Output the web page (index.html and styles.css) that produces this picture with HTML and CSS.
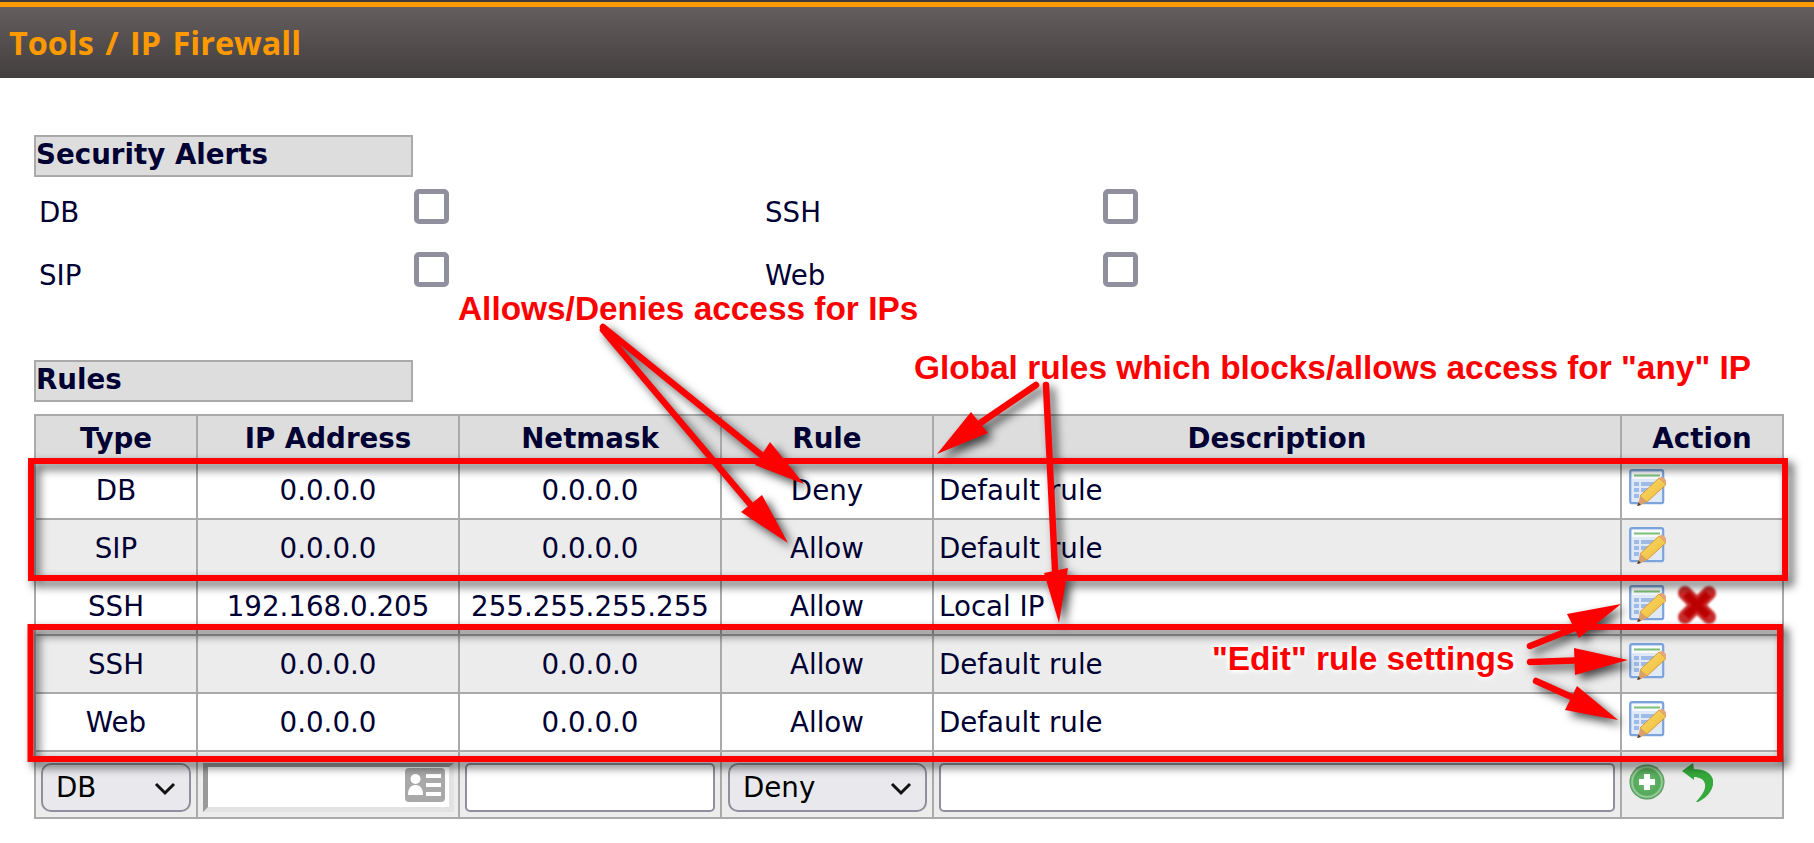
FILE: index.html
```html
<!DOCTYPE html>
<html lang="en">
<head>
<meta charset="utf-8">
<title>Tools / IP Firewall</title>
<link rel="stylesheet" href="styles.css">
</head>
<body>
<svg class="defs" width="0" height="0" aria-hidden="true">
  <defs>
    <linearGradient id="penYellow" x1="0" y1="0" x2="1" y2="1">
      <stop offset="0" stop-color="#f9dc6a"/><stop offset="1" stop-color="#eeb93a"/>
    </linearGradient>
    <radialGradient id="addGreen" cx="0.5" cy="0.5" r="0.5">
      <stop offset="0" stop-color="#6cc06e"/><stop offset="0.75" stop-color="#55a85a"/><stop offset="0.85" stop-color="#9fd0a2"/><stop offset="1" stop-color="#3f8f48"/>
    </radialGradient>
    <symbol id="icon-edit" viewBox="0 0 37 37">
      <rect x="1.2" y="1.2" width="33" height="33" rx="2" fill="#dfe9f8" stroke="#7ba3dc" stroke-width="2.2"/>
      <rect x="3" y="3" width="29.500" height="7" fill="#f7fafd"/>
      <rect x="5" y="5.500" width="26" height="2" fill="#7cc07a"/>
      <g fill="#9dbbe6">
        <rect x="5" y="13" width="5" height="4"/><rect x="12" y="13" width="18" height="4"/>
        <rect x="5" y="19" width="5" height="4"/><rect x="12" y="19" width="10" height="4"/>
        <rect x="5" y="25" width="5" height="4"/><rect x="12" y="25" width="5" height="4"/>
      </g>
      <polygon points="30,9 37,15.500 18,33 11,27" fill="url(#penYellow)" stroke="#d99a3a" stroke-width="1"/>
      <polygon points="30,9 33,7.500 37.500,11.500 37,15.500" fill="#e8a77a"/>
      <polygon points="11,27 18,33 9,37" fill="#d9a06a"/>
      <polygon points="9.500,33.500 12,36 8,37" fill="#5a3a22"/>
    </symbol>
  </defs>
</svg>

<header class="topbar">
  <h1 class="topbar-title">Tools / IP Firewall</h1>
</header>

<main class="page">
  <h2 class="section-title">Security Alerts</h2>
  <div class="alerts">
    <label class="alert-label">DB</label><input class="check" type="checkbox">
    <label class="alert-label">SSH</label><input class="check" type="checkbox">
    <label class="alert-label">SIP</label><input class="check" type="checkbox">
    <label class="alert-label">Web</label><input class="check" type="checkbox">
  </div>

  <h2 class="section-title rules-title">Rules</h2>
  <table class="rules">
    <colgroup>
      <col class="c-type"><col class="c-ip"><col class="c-mask"><col class="c-rule"><col class="c-desc"><col class="c-act">
    </colgroup>
    <thead>
      <tr><th>Type</th><th>IP Address</th><th>Netmask</th><th>Rule</th><th>Description</th><th>Action</th></tr>
    </thead>
    <tbody>
      <tr><td>DB</td><td>0.0.0.0</td><td>0.0.0.0</td><td>Deny</td><td class="left">Default rule</td>
        <td class="action"><svg class="ic-edit"><use href="#icon-edit"/></svg></td></tr>
      <tr><td>SIP</td><td>0.0.0.0</td><td>0.0.0.0</td><td>Allow</td><td class="left">Default rule</td>
        <td class="action"><svg class="ic-edit"><use href="#icon-edit"/></svg></td></tr>
      <tr><td>SSH</td><td>192.168.0.205</td><td>255.255.255.255</td><td>Allow</td><td class="left">Local IP</td>
        <td class="action"><svg class="ic-edit"><use href="#icon-edit"/></svg><svg class="ic-del" viewBox="0 0 40 40"><path d="M8 8 L32 32 M32 8 L8 32" stroke="#c92a2a" stroke-width="14" stroke-linecap="round" fill="none"/><path d="M9 9 L31 31 M31 9 L9 31" stroke="#bb0000" stroke-width="8" fill="none"/></svg></td></tr>
      <tr><td>SSH</td><td>0.0.0.0</td><td>0.0.0.0</td><td>Allow</td><td class="left">Default rule</td>
        <td class="action"><svg class="ic-edit"><use href="#icon-edit"/></svg></td></tr>
      <tr><td>Web</td><td>0.0.0.0</td><td>0.0.0.0</td><td>Allow</td><td class="left">Default rule</td>
        <td class="action"><svg class="ic-edit"><use href="#icon-edit"/></svg></td></tr>
      <tr class="add-row">
        <td><div class="select-wrap s-type"><select class="select"><option>DB</option></select>
          <svg class="chev" viewBox="0 0 22 14"><path d="M2 2 L11 11 L20 2" fill="none" stroke="#111" stroke-width="3"/></svg></div></td>
        <td><div class="ip-wrap"><input class="ip-input" type="text">
          <svg class="card" viewBox="0 0 40 34"><rect width="40" height="34" rx="4" fill="#a9a9a9"/><circle cx="10.500" cy="11" r="5" fill="#fff"/><path d="M3 27 C3 19 7 17 10.500 17 C14 17 18 19 18 27 Z" fill="#fff"/><rect x="21" y="6" width="15" height="4" fill="#fff"/><rect x="21" y="15" width="15" height="4" fill="#fff"/><rect x="21" y="24" width="15" height="4" fill="#fff"/></svg></div></td>
        <td><input class="text-input" type="text"></td>
        <td><div class="select-wrap s-rule"><select class="select"><option>Deny</option></select>
          <svg class="chev" viewBox="0 0 22 14"><path d="M2 2 L11 11 L20 2" fill="none" stroke="#111" stroke-width="3"/></svg></div></td>
        <td><input class="text-input" type="text"></td>
        <td class="action add-actions"><svg class="ic-add" viewBox="0 0 36 36"><circle cx="18" cy="18" r="17.500" fill="url(#addGreen)"/><path d="M18 10 V26 M10 18 H26" stroke="#fff" stroke-width="6"/></svg><svg class="ic-undo" viewBox="0 0 31 39"><path d="M0 8 L11 0 L12 6 C24 6 33 12 31 22 C29 31 22 36 16 39 L14 39 C19 33 24 28 23 21 C22 16 17 14 12 14 L12 17 Z" fill="#35a93c"/></svg></td>
      </tr>
    </tbody>
  </table>
</main>

<svg class="marks" viewBox="0 0 1814 843" aria-hidden="true">
  <g fill="none" stroke="#ff0000" stroke-width="6">
    <rect x="31" y="461" width="1754" height="117"/>
    <rect x="30.500" y="627" width="1749.500" height="132"/>
  </g>
  <g stroke="#ff0000" stroke-width="6.500" stroke-linecap="round" fill="#ff0000">
    <line x1="603" y1="327" x2="770" y2="462"/>
    <line x1="603" y1="330" x2="755" y2="510"/>
    <line x1="1036" y1="385" x2="970" y2="430"/>
    <line x1="1046" y1="385" x2="1056" y2="590"/>
    <line x1="1530" y1="646" x2="1590" y2="622"/>
    <line x1="1530" y1="662" x2="1590" y2="660"/>
    <line x1="1536" y1="681" x2="1585" y2="703"/>
  </g>
  <g fill="#ff0000">
    <polygon points="804,484 770,442 755,465"/>
    <polygon points="788,543 762,495 741,512"/>
    <polygon points="937,454 971,412 988,433"/>
    <polygon points="1059,623 1068,568 1044,573"/>
    <polygon points="1621,604 1567,614 1579,638"/>
    <polygon points="1628,660 1574,648 1575,675"/>
    <polygon points="1618,720 1577,686 1565,710"/>
  </g>
</svg>
<div class="note note-a">Allows/Denies access for IPs</div>
<div class="note note-b">Global rules which blocks/allows access for "any" IP</div>
<div class="note note-c">"Edit" rule settings</div>
</body>
</html>
```
FILE: styles.css
```css
html, body { margin: 0; padding: 0; background: #fff; }
body {
  position: relative;
  width: 1814px;
  height: 843px;
  overflow: hidden;
  font-family: "DejaVu Sans", sans-serif;
  font-size: 27.7px;
  color: #000033;
}
.defs { position: absolute; }

.topbar {
  box-sizing: border-box;
  height: 76px;
  margin-top: 2px;
  border-top: 5px solid #ff9900;
  background: linear-gradient(#645e5e, #433f3e);
  display: flex;
  align-items: center;
  padding: 0 0 2px 9px;
  position: relative;
}
.topbar::before {
  content: "";
  position: absolute;
  left: 0; right: 0; top: -7px;
  height: 2px;
  background: #3d3a39;
}
.topbar-title {
  margin: 0;
  font-family: "Open Sans", sans-serif;
  font-size: 32.4px;
  font-weight: 700;
  word-spacing: 3px;
  color: #ff9900;
}

.page { padding: 57px 30px 0 34px; }

.section-title {
  box-sizing: border-box;
  width: 379px;
  height: 42px;
  margin: 0;
  padding-left: 0;
  border: 2px solid #aaaaaa;
  background: #dddddd;
  font-size: 27.7px;
  font-weight: 700;
  line-height: 36px;
}

.alerts {
  display: grid;
  grid-template-columns: 380px 346px 343px 34px;
  grid-auto-rows: 63px;
  margin-top: 12px;
}
.alert-label { padding: 6px 0 0 5px; line-height: 35px; }
.check {
  appearance: none;
  box-sizing: border-box;
  width: 35px;
  height: 35px;
  margin: 0;
  border: 5px solid #8f8f9d;
  border-radius: 5px;
  background: #fff;
}
.rules-title { margin-top: 45px; }

.rules {
  table-layout: fixed;
  border-collapse: collapse;
  width: 1748px;
  margin-top: 12px;
}
.c-type { width: 162px; }
.c-ip { width: 262px; }
.c-mask { width: 262px; }
.c-rule { width: 212px; }
.c-desc { width: 688px; }
.c-act { width: 162px; }
.rules th, .rules td {
  border: 2px solid #aaaaaa;
  padding: 0;
  height: 56px;
  text-align: center;
  vertical-align: middle;
}
.rules th { background: #dddddd; font-weight: 700; height: 44px; }
.rules tbody tr:nth-child(even) td { background: #ececec; }
.rules td.left { text-align: left; padding-left: 5px; }
.rules td.action { text-align: left; vertical-align: top; height: 49px; padding: 7px 0 0 7px; }
.rules .add-row td { height: 60px; vertical-align: bottom; padding-bottom: 5px; }
.rules .add-row td.add-actions { height: 53px; vertical-align: top; padding: 12px 0 0 7px; }

.ic-edit { width: 37px; height: 37px; display: inline-block; vertical-align: top; }
.ic-del { width: 40px; height: 40px; display: inline-block; vertical-align: top; margin: 0 0 0 11px; filter: blur(0.8px); }
.ic-add { width: 36px; height: 36px; display: inline-block; vertical-align: top; }
.ic-undo { width: 31px; height: 39px; display: inline-block; vertical-align: top; margin: -1px 0 0 17px; }

.select-wrap { position: relative; box-sizing: border-box; margin-left: 5px; }
.s-type { width: 150px; }
.s-rule { width: 199px; margin-left: 6px; }
.select {
  appearance: none;
  display: block;
  box-sizing: border-box;
  width: 100%;
  height: 49px;
  margin: 0;
  padding: 0 0 0 13px;
  border: 2px solid #8f8f9d;
  border-radius: 10px;
  background: #e9e9ed;
  font: inherit;
  color: #000;
}
.chev { position: absolute; right: 15px; top: 19px; width: 22px; height: 14px; }

.ip-wrap { position: relative; margin: 0 4px 0 5px; }
.ip-input {
  display: block;
  box-sizing: border-box;
  width: 100%;
  height: 49px;
  margin: 0;
  border-style: solid;
  border-width: 4px 5px 5px 5px;
  border-color: #999 #e2e2e2 #e2e2e2 #999;
  background: #fff;
}
.card { position: absolute; right: 9px; top: 5px; width: 40px; height: 34px; }

.text-input {
  display: block;
  box-sizing: border-box;
  width: calc(100% - 10px);
  height: 49px;
  margin: 0 5px;
  border: 2px solid #8f8f9d;
  border-radius: 5px;
  background: #fff;
}

.marks {
  position: absolute;
  left: 0; top: 0;
  width: 1814px;
  height: 843px;
  pointer-events: none;
  filter: drop-shadow(5px 5px 5px rgba(0,0,0,0.7));
}
.note {
  position: absolute;
  font-family: "Liberation Sans", sans-serif;
  font-weight: 700;
  font-size: 33.4px;
  line-height: 36px;
  color: #ff0000;
  white-space: nowrap;
}
.note-a { left: 458px; top: 291px; }
.note-b { left: 914px; top: 350px; }
.note-c { left: 1212px; top: 641px; text-shadow: 0 0 4px #fff, 0 0 4px #fff, 0 0 6px #fff, 0 0 8px #fff; }
```
